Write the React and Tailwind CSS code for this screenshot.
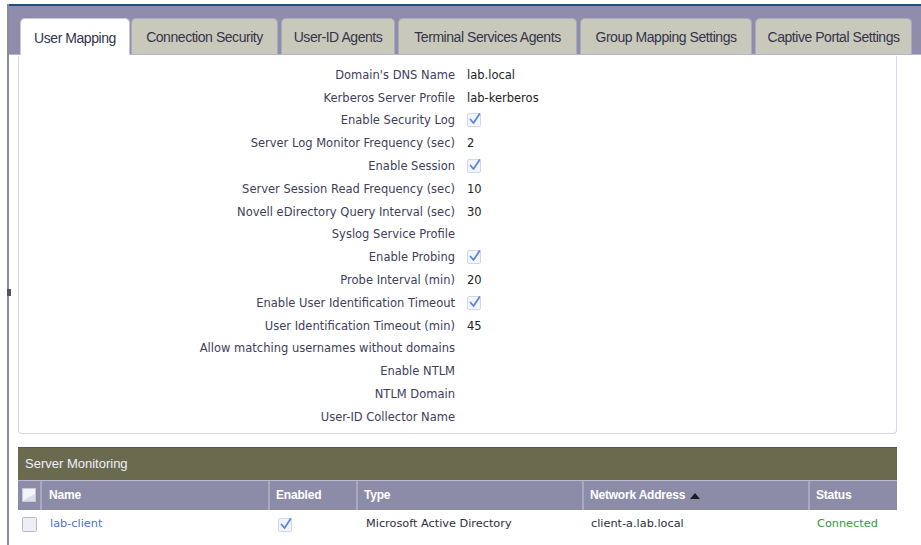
import React from "react";

const Check = ({ className = "" }) => (
  <svg width="17" height="16" viewBox="0 0 17 16" className={className}>
    <rect x="0.5" y="2.5" width="13" height="13" rx="1.5" fill="#f3f5fc" stroke="#cfd6ee" />
    <path d="M3.5 8.5 L6.5 12 L12.5 3" fill="none" stroke="#5b86dc" strokeWidth="1.8" strokeLinecap="round" strokeLinejoin="round" />
  </svg>
);

const Box = () => (
  <svg width="16" height="16" viewBox="0 0 16 16">
    <rect x="0.5" y="0.5" width="14" height="14" rx="1" fill="#eeeef6" stroke="#b8b8cc" />
  </svg>
);

const rows = [
  ["Domain's DNS Name", "lab.local"],
  ["Kerberos Server Profile", "lab-kerberos"],
  ["Enable Security Log", "check"],
  ["Server Log Monitor Frequency (sec)", "2"],
  ["Enable Session", "check"],
  ["Server Session Read Frequency (sec)", "10"],
  ["Novell eDirectory Query Interval (sec)", "30"],
  ["Syslog Service Profile", ""],
  ["Enable Probing", "check"],
  ["Probe Interval (min)", "20"],
  ["Enable User Identification Timeout", "check"],
  ["User Identification Timeout (min)", "45"],
  ["Allow matching usernames without domains", ""],
  ["Enable NTLM", ""],
  ["NTLM Domain", ""],
  ["User-ID Collector Name", ""],
];

const tabs = [
  { label: "User Mapping", w: "w-[110px]", active: true, ml: "" },
  { label: "Connection Security", w: "w-[147px]", ml: "ml-[1px]" },
  { label: "User-ID Agents", w: "w-[114px]", ml: "ml-[3px]" },
  { label: "Terminal Services Agents", w: "w-[179px]", ml: "ml-[3px]" },
  { label: "Group Mapping Settings", w: "w-[172px]", ml: "ml-[3px]" },
  { label: "Captive Portal Settings", w: "w-[157px]", ml: "ml-[3px]" },
];

export default function App() {
  return (
    <div className="w-[921px] h-[545px] bg-white overflow-hidden relative font-['DejaVu_Sans',sans-serif]">
      <div className="ml-[7px] mt-[4px] h-[541px] border-l-2 border-[#8c8c96] flex flex-col">
        <div className="h-[2px] bg-[#234f86]" />
        <div className="h-[49px] bg-[#8f8dab] flex items-end pl-[11px] border-b border-[#b4b4cc]">
          {tabs.map((t) => (
            <div
              key={t.label}
              className={`${t.w} ${t.ml} h-[36px] pt-[2px] rounded-t-[5px] flex items-center justify-center font-['Liberation_Sans',sans-serif] text-[14px] tracking-[-0.45px] text-[#34344a] ${
                t.active
                  ? "bg-white border border-b-0 border-[#c8c8dc] h-[37px] -mb-px"
                  : "bg-[#c9c9bb] border border-b-0 border-[#a9a9bf]"
              }`}
            >
              {t.label}
            </div>
          ))}
        </div>
        <div className="flex-1 pl-[9px] flex flex-col">
          <div className="w-[879px] mt-[1px] border-l border-r border-b border-[#d6d6ec] rounded-b-[4px] pt-[8px] pb-[4px]">
            {rows.map(([label, val]) => (
              <div key={label} className="h-[22.8px] flex items-center text-[11.5px]">
                <div className="w-[436px] text-right text-[#40405a]">{label}</div>
                <div className="ml-[12px] text-[#222]">
                  {val === "check" ? <Check className="-mt-[3px]" /> : val}
                </div>
              </div>
            ))}
          </div>
          <div className="w-[879px] mt-[13px]">
            <div className="h-[33px] bg-[#6a6a4f] border-t border-[#4e5a5e] flex items-center pl-[7px] font-['Liberation_Sans',sans-serif] text-[13px] text-[#f0f0ff]">
              Server Monitoring
            </div>
            <div className="h-[30px] bg-[#8d8ca8] border-t border-[#b9b9cf] flex font-['Liberation_Sans',sans-serif] font-bold text-[12px] text-white tracking-[-0.2px]">
              <div className="w-[24px] flex items-center justify-center border-r-2 border-[#a9a9be]">
                <svg width="15" height="15" viewBox="0 0 15 15">
                  <rect x="0.5" y="0.5" width="13" height="13" fill="#f4f4fa" stroke="#c8c8d8" />
                  <path d="M1 13 L13 13 L13 6 C9 8 5 9 1 13Z" fill="#dcdcea" />
                </svg>
              </div>
              <div className="w-[228px] flex items-center pl-[7px] border-r-2 border-[#a9a9be]">Name</div>
              <div className="w-[88px] flex items-center pl-[6px] border-r-2 border-[#a9a9be]">Enabled</div>
              <div className="w-[226px] flex items-center pl-[6px] border-r-2 border-[#a9a9be]">Type</div>
              <div className="w-[226px] flex items-center pl-[6px] border-r-2 border-[#a9a9be] gap-[5px]">
                Network Address
                <svg width="10" height="7" viewBox="0 0 10 7">
                  <path d="M0 7 L5 1 L10 7Z" fill="#1c1c24" />
                </svg>
              </div>
              <div className="flex-1 flex items-center pl-[6px]">Status</div>
            </div>
            <div className="h-[28px] pt-[2px] flex items-center text-[11.3px]">
              <div className="w-[24px] flex items-center justify-center">
                <Box />
              </div>
              <div className="w-[228px] pl-[8px] text-[#4a6fd4]">lab-client</div>
              <div className="w-[88px] pl-[8px]">
                <Check className="-mt-[2px]" />
              </div>
              <div className="w-[226px] pl-[8px] text-[#2e2e3e]">Microsoft Active Directory</div>
              <div className="w-[226px] pl-[7px] text-[#2e2e3e]">client-a.lab.local</div>
              <div className="flex-1 pl-[7px] text-[#2f9a3a]">Connected</div>
            </div>
          </div>
        </div>
      </div>
      <div className="absolute left-[7px] top-[289px] w-[4px] h-[7px] bg-[#55555e]" />
    </div>
  );
}
